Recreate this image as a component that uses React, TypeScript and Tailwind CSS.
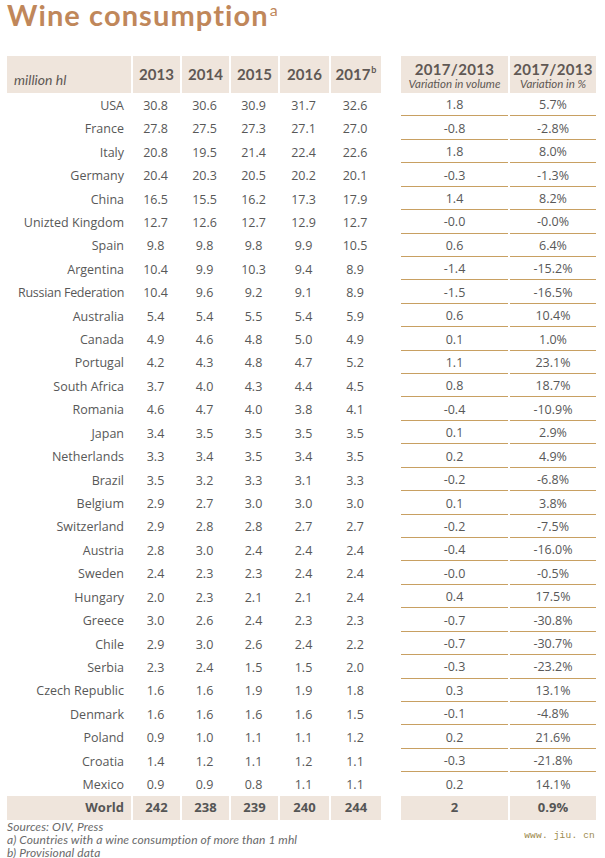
import React from "react";

type Row = [string, string, string, string, string, string, string, string];

const rows: Row[] = [
  ["USA", "30.8", "30.6", "30.9", "31.7", "32.6", "1.8", "5.7%"],
  ["France", "27.8", "27.5", "27.3", "27.1", "27.0", "-0.8", "-2.8%"],
  ["Italy", "20.8", "19.5", "21.4", "22.4", "22.6", "1.8", "8.0%"],
  ["Germany", "20.4", "20.3", "20.5", "20.2", "20.1", "-0.3", "-1.3%"],
  ["China", "16.5", "15.5", "16.2", "17.3", "17.9", "1.4", "8.2%"],
  ["Unizted Kingdom", "12.7", "12.6", "12.7", "12.9", "12.7", "-0.0", "-0.0%"],
  ["Spain", "9.8", "9.8", "9.8", "9.9", "10.5", "0.6", "6.4%"],
  ["Argentina", "10.4", "9.9", "10.3", "9.4", "8.9", "-1.4", "-15.2%"],
  ["Russian Federation", "10.4", "9.6", "9.2", "9.1", "8.9", "-1.5", "-16.5%"],
  ["Australia", "5.4", "5.4", "5.5", "5.4", "5.9", "0.6", "10.4%"],
  ["Canada", "4.9", "4.6", "4.8", "5.0", "4.9", "0.1", "1.0%"],
  ["Portugal", "4.2", "4.3", "4.8", "4.7", "5.2", "1.1", "23.1%"],
  ["South Africa", "3.7", "4.0", "4.3", "4.4", "4.5", "0.8", "18.7%"],
  ["Romania", "4.6", "4.7", "4.0", "3.8", "4.1", "-0.4", "-10.9%"],
  ["Japan", "3.4", "3.5", "3.5", "3.5", "3.5", "0.1", "2.9%"],
  ["Netherlands", "3.3", "3.4", "3.5", "3.4", "3.5", "0.2", "4.9%"],
  ["Brazil", "3.5", "3.2", "3.3", "3.1", "3.3", "-0.2", "-6.8%"],
  ["Belgium", "2.9", "2.7", "3.0", "3.0", "3.0", "0.1", "3.8%"],
  ["Switzerland", "2.9", "2.8", "2.8", "2.7", "2.7", "-0.2", "-7.5%"],
  ["Austria", "2.8", "3.0", "2.4", "2.4", "2.4", "-0.4", "-16.0%"],
  ["Sweden", "2.4", "2.3", "2.3", "2.4", "2.4", "-0.0", "-0.5%"],
  ["Hungary", "2.0", "2.3", "2.1", "2.1", "2.4", "0.4", "17.5%"],
  ["Greece", "3.0", "2.6", "2.4", "2.3", "2.3", "-0.7", "-30.8%"],
  ["Chile", "2.9", "3.0", "2.6", "2.4", "2.2", "-0.7", "-30.7%"],
  ["Serbia", "2.3", "2.4", "1.5", "1.5", "2.0", "-0.3", "-23.2%"],
  ["Czech Republic", "1.6", "1.6", "1.9", "1.9", "1.8", "0.3", "13.1%"],
  ["Denmark", "1.6", "1.6", "1.6", "1.6", "1.5", "-0.1", "-4.8%"],
  ["Poland", "0.9", "1.0", "1.1", "1.1", "1.2", "0.2", "21.6%"],
  ["Croatia", "1.4", "1.2", "1.1", "1.2", "1.1", "-0.3", "-21.8%"],
  ["Mexico", "0.9", "0.9", "0.8", "1.1", "1.1", "0.2", "14.1%"],
];

const leftCols = "grid grid-cols-[124px_49px_49px_49px_51px_52px]";
const rightCols = "grid grid-cols-[107px_88px]";

export default function App() {
  return (
    <div className="w-[605px] h-[858px] bg-white relative overflow-hidden font-['Open_Sans',sans-serif] text-[#585858]">
      <div className="h-[56px] pl-[7px] flex flex-col">
        <div className="font-['Lato',sans-serif] font-bold text-[29px] leading-[29px] text-[#c0875a] tracking-[1.1px] whitespace-nowrap">
          Wine consumption
          <span className="inline-block align-top text-[16px] leading-[16px] font-normal ml-[1px] mt-[2px] tracking-normal">
            a
          </span>
        </div>
      </div>

      <div className="flex pl-[7px] gap-[20px]">
        {/* Left table */}
        <div className="w-[374px] flex flex-col">
          <div className={`${leftCols} h-[37px] font-['Lato',sans-serif] text-[#605854]`}>
            <div className="bg-[#efe5dc] flex items-end pl-[7px] pb-[3px] italic text-[14px]">
              million hl
            </div>
            {["2013", "2014", "2015", "2016"].map((y) => (
              <div
                key={y}
                className="bg-[#efe5dc] border-l-[2px] border-white flex items-center justify-center font-bold text-[15px]"
              >
                {y}
              </div>
            ))}
            <div className="bg-[#efe5dc] border-l-[2px] border-white flex items-center justify-center font-bold text-[15px]">
              2017
              <span className="inline-block self-start mt-[9px] text-[9px] leading-[9px] ml-[1px]">b</span>
            </div>
          </div>
          {rows.map((r) => (
            <div key={r[0]} className={`${leftCols} h-[23.43px] pt-[3px] text-[12.5px] items-center`}>
              <div className="text-right pr-[7px] whitespace-nowrap">
                {r[0] === "Russian Federation" ? (
                  <span className="inline-block tracking-[-0.3px]">{r[0]}</span>
                ) : (
                  r[0]
                )}
              </div>
              {r.slice(1, 6).map((v, i) => (
                <div key={i} className="text-center">
                  {v}
                </div>
              ))}
            </div>
          ))}
          <div className={`${leftCols} h-[24px] text-[13px] font-bold text-[#555]`}>
            <div className="bg-[#efe5dc] flex items-center justify-end pr-[7px] pt-[1px]">World</div>
            {["242", "238", "239", "240", "244"].map((v) => (
              <div key={v} className="bg-[#efe5dc] border-l-[2px] border-white flex items-center justify-center pt-[1px]">
                {v}
              </div>
            ))}
          </div>
        </div>

        {/* Right table */}
        <div className="w-[195px] flex flex-col">
          <div className={`${rightCols} h-[37px] font-['Lato',sans-serif] text-[#605854]`}>
            <div className="bg-[#efe5dc] flex flex-col items-center justify-center pt-[1px]">
              <div className="font-bold text-[15px] leading-[16px] tracking-[0.3px]">2017/2013</div>
              <div className="italic text-[11.5px] leading-[13px]">Variation in volume</div>
            </div>
            <div className="bg-[#efe5dc] border-l-[2px] border-white flex flex-col items-center justify-center pt-[1px]">
              <div className="font-bold text-[15px] leading-[16px] tracking-[0.3px]">2017/2013</div>
              <div className="italic text-[11.5px] leading-[13px]">Variation in %</div>
            </div>
          </div>
          {rows.map((r, idx) => {
            const last = idx === rows.length - 1;
            return (
              <div key={r[0]} className={`${rightCols} h-[23.43px] text-[12.5px]`}>
                <div
                  className={`flex items-center justify-center pt-[3px] ${last ? "" : "border-b border-[#c8a062]"}`}
                >
                  {r[6]}
                </div>
                <div
                  className={`flex items-center justify-center pt-[3px] ml-[2px] ${last ? "" : "border-b border-[#c8a062]"}`}
                >
                  {r[7]}
                </div>
              </div>
            );
          })}
          <div className={`${rightCols} h-[24px] text-[13px] font-bold text-[#555]`}>
            <div className="bg-[#efe5dc] flex items-center justify-center pt-[1px]">2</div>
            <div className="bg-[#efe5dc] border-l-[2px] border-white flex items-center justify-center pt-[1px]">0.9%</div>
          </div>
        </div>
      </div>

      <div className="flex pl-[7px] pr-[10px] justify-between">
        <div className="font-['Lato',sans-serif] italic text-[12px] leading-[13.2px] tracking-[0.1px] text-[#6a6a6a]">
          <div>Sources: OIV, Press</div>
          <div>a) Countries with a wine consumption of more than 1 mhl</div>
          <div>b) Provisional data</div>
        </div>
        <div className="mt-[10px] font-['Liberation_Mono',monospace] text-[9.5px] leading-[12px] text-[#9c8a4e] tracking-[0.2px] whitespace-pre">
          www. jiu. cn
        </div>
      </div>
    </div>
  );
}
